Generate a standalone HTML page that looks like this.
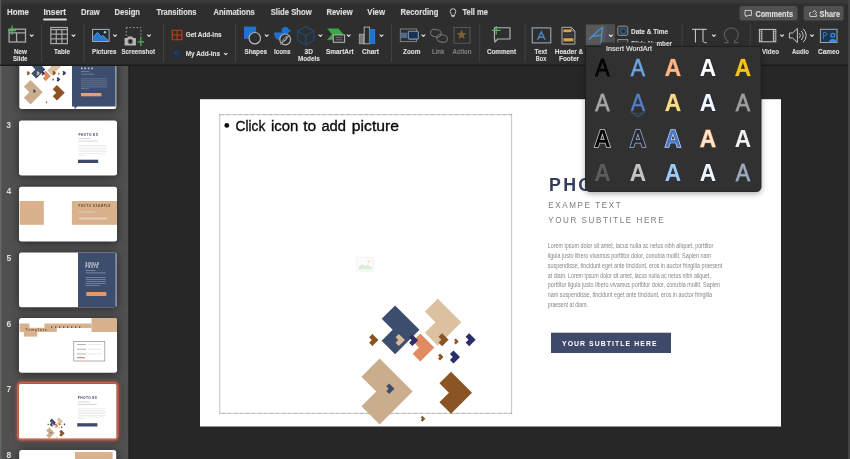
<!DOCTYPE html>
<html><head><meta charset="utf-8">
<style>
html,body{margin:0;padding:0;background:#2d2d2d;overflow:hidden;width:850px;height:459px}
svg{position:absolute;left:0;top:0;display:block;will-change:transform}
text{font-family:"Liberation Sans",sans-serif}
.tab{font-size:8.4px;font-weight:bold;fill:#dcdcdc;stroke:#dcdcdc;stroke-width:0.18px}
.lbl{font-size:7.6px;font-weight:bold;fill:#dedede;stroke:#dedede;stroke-width:0.15px}
.lbl .dim{fill:#7e7e7e;stroke:#7e7e7e}
</style></head><body>
<svg width="850" height="459" viewBox="0 0 850 459">
<defs>
<linearGradient id="topg" x1="0" y1="0" x2="0" y2="1"><stop offset="0" stop-color="#3c3c3c"/><stop offset="1" stop-color="#2e2e2e"/></linearGradient>
<clipPath id="sbclip"><rect x="0" y="66" width="128.5" height="393"/></clipPath>
<filter id="tshadow" x="-30%" y="-30%" width="160%" height="160%"><feGaussianBlur stdDeviation="4"/></filter>
<filter id="glow" x="-20%" y="-20%" width="140%" height="140%"><feGaussianBlur stdDeviation="1.5"/></filter>
<filter id="pshadow" x="-20%" y="-20%" width="140%" height="150%"><feGaussianBlur stdDeviation="3"/></filter>
<g id="s7txt">
<text x="349" y="91.5" style="font-size:17.8px;font-weight:bold;fill:#343d5c;letter-spacing:2.3px">PHOTO EX</text>
<text x="0" y="0" transform="translate(348.2 109.2) scale(0.84 1)" textLength="86.3" lengthAdjust="spacing" style="font-size:9.6px;fill:#7b7b7b">EXAMPE TEXT</text>
<text x="0" y="0" transform="translate(348.2 124) scale(0.84 1)" textLength="137.4" lengthAdjust="spacing" style="font-size:9.6px;fill:#7b7b7b">YOUR SUBTITLE HERE</text>
<g style="font-size:6.4px;fill:#868686">
<text x="347.8" y="149.2" textLength="165.6" lengthAdjust="spacingAndGlyphs">Lorem ipsum dolor sit amet, lacus nulla ac netus nibh aliquet, porttitor</text>
<text x="347.8" y="159.0" textLength="163.2" lengthAdjust="spacingAndGlyphs">ligula justo libero vivamus porttitor dolor, conubia mollit. Sapien nam</text>
<text x="347.8" y="168.8" textLength="174.5" lengthAdjust="spacingAndGlyphs">suspendisse, tincidunt eget ante tincidunt, eros in auctor fringilla praesent</text>
<text x="347.8" y="178.6" textLength="163.2" lengthAdjust="spacingAndGlyphs">at diam. Lorem ipsum dolor sit amet, lacus nulla ac netus nibh aliquet,</text>
<text x="347.8" y="188.4" textLength="172.2" lengthAdjust="spacingAndGlyphs">porttitor ligula justo libero vivamus porttitor dolor, conubia mollit. Sapien</text>
<text x="347.8" y="198.2" textLength="164.2" lengthAdjust="spacingAndGlyphs">nam suspendisse, tincidunt eget ante tincidunt, eros in auctor fringilla</text>
<text x="347.8" y="208.0" textLength="40.2" lengthAdjust="spacingAndGlyphs">praesent at diam.</text>
</g>
<rect x="351" y="233.7" width="120" height="20.3" fill="#3f4a6b"/>
<text x="0" y="0" transform="translate(362 246.6) scale(0.86 1)" textLength="109.9" lengthAdjust="spacing" style="font-size:8px;font-weight:bold;fill:#ffffff">YOUR SUBTITLE HERE</text>
</g>
<g id="s7shp">
<path d="M237.80 199.70 L261.30 223.20 L237.80 246.70 L224.88 233.77 L235.45 223.20 L224.88 212.62z" fill="#dbc1a0"/>
<path d="M195.10 206.40 L219.50 230.80 L195.10 255.20 L181.68 241.78 L192.66 230.80 L181.68 219.82z" fill="#3d4d6d"/>
<path d="M220.30 234.50 L234.30 248.50 L220.30 262.50 L212.60 254.80 L218.90 248.50 L212.60 242.20z" fill="#e08b62"/>
<path d="M172.40 234.90 L178.50 241.00 L172.40 247.10 L169.05 243.75 L171.79 241.00 L169.05 238.25z" fill="#8a5424"/>
<path d="M198.90 234.90 L205.00 241.00 L198.90 247.10 L195.55 243.75 L198.29 241.00 L195.55 238.25z" fill="#d6b995"/>
<path d="M212.30 235.40 L218.10 241.20 L212.30 247.00 L209.11 243.81 L211.72 241.20 L209.11 238.59z" fill="#2c2d6b"/>
<path d="M242.10 234.20 L248.60 240.70 L242.10 247.20 L238.53 243.62 L241.45 240.70 L238.53 237.77z" fill="#8a5424"/>
<path d="M255.70 239.40 L258.70 242.40 L255.70 245.40 L254.05 243.75 L255.40 242.40 L254.05 241.05z" fill="#8a5424"/>
<path d="M269.20 234.20 L275.70 240.70 L269.20 247.20 L265.62 243.62 L268.55 240.70 L265.62 237.77z" fill="#2c2d6b"/>
<path d="M240.00 254.50 L243.50 258.00 L240.00 261.50 L238.07 259.57 L239.65 258.00 L238.07 256.43z" fill="#8a5424"/>
<path d="M253.50 251.50 L260.00 258.00 L253.50 264.50 L249.93 260.93 L252.85 258.00 L249.93 255.07z" fill="#2c2d6b"/>
<path d="M179.60 259.50 L212.60 292.50 L179.60 325.50 L161.45 307.35 L176.30 292.50 L161.45 277.65z" fill="#c9ad8d"/>
<path d="M189.20 284.50 L194.40 289.70 L189.20 294.90 L186.34 292.04 L188.68 289.70 L186.34 287.36z" fill="#3d4d6d"/>
<path d="M251.00 272.70 L272.00 293.70 L251.00 314.70 L239.45 303.15 L248.90 293.70 L239.45 284.25z" fill="#8a5424"/>
<path d="M222.30 316.80 L225.30 319.80 L222.30 322.80 L220.65 321.15 L222.00 319.80 L220.65 318.45z" fill="#8a5424"/>
</g>
</defs>
<rect x="0" y="0" width="850" height="66" fill="#2e2e2e"/>
<rect x="0" y="0" width="850" height="6" fill="url(#topg)"/>
<rect x="0" y="0" width="1.2" height="66" fill="#555"/>
<rect x="0" y="64.5" width="850" height="1.5" fill="#1c1c1c"/>
<rect x="0" y="66" width="128.5" height="393" fill="#505050"/>
<rect x="0" y="66" width="1.4" height="393" fill="#666"/>
<rect x="128.5" y="66" width="1.5" height="393" fill="#1e1e1e"/>
<rect x="130" y="66" width="720" height="393" fill="#272727"/>
<rect x="848.2" y="0" width="1.8" height="459" fill="#474747"/>
<g class="tab">
<text x="7" y="14.6" textLength="22" lengthAdjust="spacingAndGlyphs">Home</text>
<text x="43.5" y="14.6" textLength="22.5" lengthAdjust="spacingAndGlyphs">Insert</text>
<text x="81" y="14.6" textLength="18.6" lengthAdjust="spacingAndGlyphs">Draw</text>
<text x="114.6" y="14.6" textLength="25.4" lengthAdjust="spacingAndGlyphs">Design</text>
<text x="156.5" y="14.6" textLength="40" lengthAdjust="spacingAndGlyphs">Transitions</text>
<text x="213.4" y="14.6" textLength="41.4" lengthAdjust="spacingAndGlyphs">Animations</text>
<text x="270.7" y="14.6" textLength="41" lengthAdjust="spacingAndGlyphs">Slide Show</text>
<text x="326.4" y="14.6" textLength="26.2" lengthAdjust="spacingAndGlyphs">Review</text>
<text x="367.3" y="14.6" textLength="17.7" lengthAdjust="spacingAndGlyphs">View</text>
<text x="400.6" y="14.6" textLength="37.8" lengthAdjust="spacingAndGlyphs">Recording</text>
<text x="462.4" y="14.6" textLength="25.6" lengthAdjust="spacingAndGlyphs">Tell me</text>
</g>
<rect x="43" y="18.5" width="24" height="2" rx="1" fill="#d8d8d8"/>
<!-- lightbulb -->
<g fill="none" stroke="#d0d0d0" stroke-width="0.9">
<path d="M450.2 11.5a2.8 2.8 0 1 1 5.6 0c0 1.3-0.9 2-1.2 2.8v1.2h-3.2v-1.2c-0.3-0.8-1.2-1.5-1.2-2.8z"/>
<path d="M451.6 16.6h2.8"/>
</g>
<!-- Comments / Share buttons -->
<rect x="739.5" y="6" width="58" height="14.6" rx="2" fill="#515151"/>
<rect x="803.6" y="6" width="40" height="14.6" rx="2" fill="#515151"/>
<g fill="none" stroke="#d8d8d8" stroke-width="0.9">
<path d="M745 10.4h6.4v5h-3.8l-1.4 1.6v-1.6h-1.2z"/>
<path d="M809.8 16.2v-3.6h1.2M812.5 12.6l2-2.2 2.2 2-2.2 2.1M810 16.5h6.4v-2.2"/>
</g>
<g class="tab" style="font-size:8.2px">
<text x="755.4" y="16.8" textLength="37.6" lengthAdjust="spacingAndGlyphs">Comments</text>
<text x="819.6" y="16.8" textLength="20.4" lengthAdjust="spacingAndGlyphs">Share</text>
</g>
<!-- separators -->
<g fill="#444444">
<rect x="41.2" y="24" width="0.9" height="38"/>
<rect x="83.6" y="24" width="0.9" height="38"/>
<rect x="163.1" y="24" width="0.9" height="38"/>
<rect x="235" y="24" width="0.9" height="38"/>
<rect x="391" y="24" width="0.9" height="38"/>
<rect x="479.3" y="24" width="0.9" height="38"/>
<rect x="524.7" y="24" width="0.9" height="38"/>
<rect x="681.6" y="24" width="0.9" height="38"/>
<rect x="749.7" y="24" width="0.9" height="38"/>
</g>
<!-- chevrons -->
<g fill="none" stroke="#e6e6e6" stroke-width="1.1" stroke-linecap="round" stroke-linejoin="round">
<path d="M30.2 34.8l1.5 1.5 1.5-1.5"/>
<path d="M72 34.8l1.5 1.5 1.5-1.5"/>
<path d="M113.5 34.8l1.5 1.5 1.5-1.5"/>
<path d="M147.5 34.8l1.5 1.5 1.5-1.5"/>
<path d="M265.2 34.8l1.5 1.5 1.5-1.5"/>
<path d="M318.9 34.8l1.5 1.5 1.5-1.5"/>
<path d="M347.2 34.8l1.5 1.5 1.5-1.5"/>
<path d="M380 34.8l1.5 1.5 1.5-1.5"/>
<path d="M421.9 34.8l1.5 1.5 1.5-1.5"/>
<path d="M712.4 34.8l1.5 1.5 1.5-1.5"/>
<path d="M780.5 34.8l1.5 1.5 1.5-1.5"/>
<path d="M810.5 34.8l1.5 1.5 1.5-1.5"/>
<path d="M224.5 53.4l1.3 1.3 1.3-1.3"/>
</g>
<!-- New Slide -->
<g fill="none" stroke="#a8a8a8" stroke-width="1.3">
<rect x="9.1" y="29.2" width="16.4" height="12.8"/>
<path d="M9.1 32.8h16.4M16.6 32.8v9.2"/>
</g>
<path d="M12.1 25.8v8.9M7.9 30.5h8.1" stroke="#58b05c" stroke-width="1.3"/>
<!-- Table -->
<g fill="none" stroke="#a8a8a8" stroke-width="1.2">
<rect x="50.8" y="27.5" width="16.6" height="16.1"/>
<path d="M50.8 29.6h16.6M50.8 34.2h16.6M50.8 38.9h16.6M56.3 29.6v14M61.9 29.6v14"/>
</g>
<!-- Pictures -->
<rect x="92.6" y="29.4" width="16.5" height="12" fill="#1a2a3a" stroke="#b0b0b0" stroke-width="1"/>
<path d="M93.1 40.9v-3.5l4.3-5 4 4.3 1.6-1.3 5.6 5.5z" fill="#2a78d0"/>
<path d="M93.1 37.4l4.3-5 4 4.3M101.4 36.7l1.6-1.3 5.6 5.5" fill="none" stroke="#6aaaf0" stroke-width="0.8"/>
<circle cx="105" cy="32.3" r="1.3" fill="#c8b890"/>
<!-- Screenshot -->
<path d="M126.3 27.6h14.6v9" fill="none" stroke="#9a9a9a" stroke-width="1" stroke-dasharray="1.6 1.8"/>
<path d="M126.3 27.6v8.8" fill="none" stroke="#9a9a9a" stroke-width="1" stroke-dasharray="1.6 1.8"/>
<path d="M124.6 38h2.5l1-1.5h4.2l1 1.5h2.6v7.4h-11.3z" fill="#b8b8b8"/>
<circle cx="130.3" cy="41.4" r="2.6" fill="#5a5a5a"/>
<circle cx="130.3" cy="41.4" r="1.3" fill="#111"/>
<path d="M140.8 36.5v9.6M137.6 41.8h6.4" stroke="#58b05c" stroke-width="1.2"/>
<!-- Get Add-ins -->
<rect x="172.3" y="30.2" width="9.6" height="9.6" rx="0.8" fill="#4a2216" stroke="#b04828" stroke-width="1.1"/>
<path d="M177.1 30.2v9.6M172.3 35h9.6" stroke="#b04828" stroke-width="1"/>
<!-- My Add-ins -->
<circle cx="176.6" cy="54" r="4.6" fill="#1e3048"/>
<circle cx="176.6" cy="53" r="1.6" fill="none" stroke="#34506e" stroke-width="0.7"/>
<!-- Shapes -->
<rect x="244" y="26.6" width="12.1" height="12.2" fill="#1f72d0"/>
<circle cx="254.8" cy="38.2" r="5.7" fill="#2d2d2d" stroke="#b5b5b5" stroke-width="1.2"/>
<!-- Icons -->
<circle cx="285.3" cy="30.8" r="3.7" fill="#1f72d0"/>
<path d="M288 29.2l3.6 1.6-3.4 1.8z" fill="#1f72d0"/>
<path d="M274.2 32.6h8.6l4.6 1.2c0.4 4-2.6 6.4-6.2 6.4h-0.8a6.2 6.2 0 0 1-6.2-6.2z" fill="#1f72d0"/>
<circle cx="285.2" cy="39.4" r="5.4" fill="#2d2d2d" stroke="#b5b5b5" stroke-width="1.2"/>
<path d="M280.4 44.6l8.8-9.2" stroke="#b5b5b5" stroke-width="1"/>
<path d="M282.6 41.8c0-3 2-4.6 4.6-5.4c0.2 2.6-1.4 4.8-4.6 5.4z" fill="none" stroke="#b5b5b5" stroke-width="0.8"/>
<!-- 3D Models -->
<g fill="none" stroke="#234a72" stroke-width="1.1" stroke-linejoin="round">
<path d="M305.8 26.5l8 4.6v9.2l-8 4.6-8-4.6v-9.2z"/>
<path d="M297.8 31.1l8 4.6 8-4.6M305.8 35.7v9.2"/>
</g>
<!-- SmartArt -->
<path d="M327 28.6h11.5l5 5.6-5 5.6h-11.5l5-5.6z" fill="#3da648"/>
<rect x="333.3" y="34.9" width="11.3" height="7.4" fill="#2d2d2d" stroke="#b0b0b0" stroke-width="1.1"/>
<path d="M335.5 37.4h7M335.5 39.8h7" stroke="#888" stroke-width="0.8"/>
<!-- Chart -->
<rect x="359.3" y="34.2" width="4.4" height="9.6" fill="#777" stroke="#aaa" stroke-width="0.8"/>
<rect x="364.2" y="27.1" width="5.2" height="16.7" fill="#2d2d2d" stroke="#b8b8b8" stroke-width="0.9"/>
<rect x="369.4" y="29.3" width="5.4" height="14.5" fill="#1f72d0" stroke="#3a8ae0" stroke-width="0.6"/>
<!-- Zoom -->
<rect x="400.3" y="29" width="16.3" height="12.6" fill="#2d2d2d" stroke="#8a8a8a" stroke-width="0.9"/>
<rect x="401" y="32.6" width="6" height="5.5" fill="#4e6a88"/>
<rect x="408.3" y="31.3" width="10" height="7.8" rx="1" fill="#173252" stroke="#7d9ab8" stroke-width="1.1"/>
<!-- Link -->
<g fill="none" stroke="#6e6e6e" stroke-width="1.2">
<rect x="430.6" y="29.6" width="10.6" height="7.2" rx="3.6" transform="rotate(12 436 33)"/>
<rect x="436.8" y="34.8" width="10.6" height="7.2" rx="3.6" transform="rotate(12 442 38.4)"/>
</g>
<!-- Action -->
<rect x="454" y="27.4" width="16" height="15.8" fill="none" stroke="#5e5e5e" stroke-width="0.9"/>
<path d="M461.6 29.8l1.4 3.1 3.4 0.3-2.6 2.3 0.8 3.4-3-1.9-3 1.9 0.8-3.4-2.6-2.3 3.4-0.3z" fill="#7e6032"/>
<!-- Comment -->
<path d="M494.4 27.8h15.6v11.2h-12.2l-3 3.2v-3.2h-0.4z" fill="none" stroke="#b8b8b8" stroke-width="1.1" stroke-linejoin="round"/>
<path d="M496.2 26v8.6M491.8 30.3h8.8" stroke="#5ab85e" stroke-width="1.2"/>
<!-- Text Box -->
<rect x="532.2" y="27.9" width="18.6" height="15" fill="none" stroke="#a6b4c2" stroke-width="1"/>
<path d="M537.6 39.8l3.7-7.9 3.8 7.9M539 37.2h4.6" fill="none" stroke="#4a84c8" stroke-width="1.4"/>
<!-- Header & Footer -->
<path d="M562 27.3h9.3l3.6 3.6v13.2h-12.9z" fill="#2d2d2d" stroke="#b0b0b0" stroke-width="1"/>
<path d="M571.3 27.3v3.6h3.6" fill="none" stroke="#b0b0b0" stroke-width="0.8"/>
<rect x="563.4" y="29.4" width="7.6" height="2.8" fill="#d8a447"/>
<rect x="563.4" y="38.2" width="10" height="3.2" fill="#d8a447"/>
<path d="M564 34.6h9M564 36.2h9" stroke="#555" stroke-width="0.6"/>
<!-- WordArt button -->
<rect x="585.8" y="24.5" width="29.2" height="20.7" fill="#585858"/>
<rect x="605.5" y="24.5" width="9.5" height="20.7" fill="#4e4e4e"/>
<path d="M589.4 39.2c3.5-3.2 9-9.5 13.2-11.8-0.6 4.5-1.4 10.5-1.6 15.6M591.6 36.6c3-0.3 6.5-0.9 9.6-1.6" fill="none" stroke="#4a90d8" stroke-width="1.3" stroke-linecap="round" stroke-linejoin="round"/>
<path d="M609.3 35l1.5 1.5 1.5-1.5" fill="none" stroke="#e6e6e6" stroke-width="1.1" stroke-linecap="round"/>
<!-- Date & Time -->
<rect x="617.8" y="26.1" width="10" height="9.3" rx="1.5" fill="#3a3a3a" stroke="#9a9a9a" stroke-width="0.9"/>
<circle cx="623.3" cy="31.2" r="2.6" fill="#16324e" stroke="#3a78b8" stroke-width="0.8"/>
<rect x="617.8" y="39.6" width="10" height="6" fill="#3a3a3a" stroke="#9a9a9a" stroke-width="0.9"/>
<!-- pi / omega -->
<g fill="none" stroke="#d4d4d4" stroke-width="1">
<path d="M692 29.3h14.8M695.4 29.3v13.2M703 29.3v11.4c0 1.4 1 2 2.2 2h1.6"/>
</g>
<path d="M724 42.6h4v-1.6a7 7 0 1 1 6.6 0v1.6h4" fill="none" stroke="#5c5c5c" stroke-width="1.2"/>
<!-- Video -->
<g fill="none" stroke="#c8c8c8" stroke-width="1">
<rect x="759.4" y="29.4" width="16.4" height="12.4"/>
<path d="M761.8 29.4v12.4M773.4 29.4v12.4"/>
</g>
<path d="M760.2 31.4h1M760.2 33.6h1M760.2 35.8h1M760.2 38h1M760.2 40.2h1M774 31.4h1M774 33.6h1M774 35.8h1M774 38h1M774 40.2h1" stroke="#c8c8c8" stroke-width="0.7"/>
<!-- Audio -->
<g fill="none" stroke="#c8c8c8" stroke-width="1" stroke-linejoin="round">
<path d="M789.4 33h3.2l4.8-4.6v14.2l-4.8-4.6h-3.2z"/>
<path d="M799.2 33.2a3 3 0 0 1 0 4.6M801.2 31a6 6 0 0 1 0 9M803.2 28.8a9 9 0 0 1 0 13.4"/>
</g>
<!-- Cameo -->
<rect x="820.4" y="29.3" width="16.6" height="13.2" fill="#1c3450" stroke="#a8a8a8" stroke-width="1"/>
<path d="M823.4 39v-6.4h1.8a1.6 1.6 0 0 1 0 3.2h-1.8" fill="none" stroke="#3f7fc8" stroke-width="0.9"/>
<circle cx="832.8" cy="35.2" r="1.9" fill="none" stroke="#3a8ee8" stroke-width="1.2"/>
<path d="M829 42.4a3.8 3.4 0 0 1 7.6 0z" fill="#3a8ee8"/>
<!-- ribbon labels -->
<g class="lbl">
<text x="14" y="54" textLength="13" lengthAdjust="spacingAndGlyphs">New</text>
<text x="13" y="61.4" textLength="14.5" lengthAdjust="spacingAndGlyphs">Slide</text>
<text x="54" y="54" textLength="16" lengthAdjust="spacingAndGlyphs">Table</text>
<text x="92" y="54" textLength="24.5" lengthAdjust="spacingAndGlyphs">Pictures</text>
<text x="121.5" y="54" textLength="33.5" lengthAdjust="spacingAndGlyphs">Screenshot</text>
<text x="185.7" y="37.3" textLength="35.9" lengthAdjust="spacingAndGlyphs">Get Add-ins</text>
<text x="185.7" y="56.2" textLength="34.3" lengthAdjust="spacingAndGlyphs">My Add-ins</text>
<text x="244.4" y="54" textLength="22.6" lengthAdjust="spacingAndGlyphs">Shapes</text>
<text x="274" y="54" textLength="16.5" lengthAdjust="spacingAndGlyphs">Icons</text>
<text x="304.6" y="54" textLength="8.4" lengthAdjust="spacingAndGlyphs">3D</text>
<text x="298" y="61.4" textLength="21.7" lengthAdjust="spacingAndGlyphs">Models</text>
<text x="326" y="54" textLength="27.6" lengthAdjust="spacingAndGlyphs">SmartArt</text>
<text x="362" y="54" textLength="17" lengthAdjust="spacingAndGlyphs">Chart</text>
<text x="403" y="54" textLength="17.5" lengthAdjust="spacingAndGlyphs">Zoom</text>
<text x="432" y="54" textLength="12.4" lengthAdjust="spacingAndGlyphs" class="dim">Link</text>
<text x="452.6" y="54" textLength="18.9" lengthAdjust="spacingAndGlyphs" class="dim">Action</text>
<text x="486.9" y="54" textLength="29.1" lengthAdjust="spacingAndGlyphs">Comment</text>
<text x="534.5" y="53.8" textLength="12.5" lengthAdjust="spacingAndGlyphs">Text</text>
<text x="535.8" y="61.2" textLength="10.4" lengthAdjust="spacingAndGlyphs">Box</text>
<text x="554.7" y="53.8" textLength="28.6" lengthAdjust="spacingAndGlyphs">Header &amp;</text>
<text x="559" y="61.2" textLength="20" lengthAdjust="spacingAndGlyphs">Footer</text>
<text x="631" y="33.6" textLength="37" lengthAdjust="spacingAndGlyphs">Date &amp; Time</text>
<text x="631" y="46.3" textLength="40.9" lengthAdjust="spacingAndGlyphs">Slide Number</text>
<text x="762" y="54" textLength="17" lengthAdjust="spacingAndGlyphs">Video</text>
<text x="792" y="54" textLength="17" lengthAdjust="spacingAndGlyphs">Audio</text>
<text x="818" y="54" textLength="21.4" lengthAdjust="spacingAndGlyphs">Cameo</text>
</g>

<g clip-path="url(#sbclip)">
<g fill="#000" opacity="0.5" filter="url(#tshadow)"><rect x="19" y="55.4" width="98" height="55" rx="3"/><rect x="19" y="121.6" width="98" height="55" rx="3"/><rect x="19" y="187.7" width="98" height="55" rx="3"/><rect x="19" y="253.4" width="98" height="55" rx="3"/><rect x="19" y="319" width="98" height="55" rx="3"/><rect x="19" y="384.5" width="98" height="55" rx="3"/><rect x="19" y="451" width="98" height="55" rx="3"/></g>
<!-- thumb 2 -->
<rect x="19.3" y="54.4" width="97" height="54.6" rx="2.5" fill="#ffffff"/>
<path d="M72 54.4h43.6v52.2h-38.4l-2.4 2.4-0.4-2.4h-2.4z" fill="#3d4d6d"/>
<clipPath id="t2clip"><rect x="19.3" y="54.4" width="52.7" height="54.6"/></clipPath>
<g clip-path="url(#t2clip)"><use href="#s7shp" transform="translate(-35.9 -16) scale(0.37)"/></g>
<rect x="81" y="93" width="20.4" height="3.3" fill="#e0a07a"/>
<g fill="#c8cede"><rect x="81" y="67.6" width="1.6" height="1.6"/><rect x="84.4" y="67.6" width="1.6" height="1.6"/><rect x="87.8" y="67.6" width="1.6" height="1.6"/><rect x="91.2" y="67.6" width="1.6" height="1.6"/></g>
<g fill="#7e89a4"><rect x="81" y="71" width="8" height="0.8"/><rect x="81" y="73.7" width="13" height="0.8"/>
<rect x="81" y="78.6" width="26" height="0.6"/><rect x="81" y="80.6" width="26" height="0.6"/><rect x="81" y="82.6" width="26" height="0.6"/><rect x="81" y="84.6" width="26" height="0.6"/><rect x="81" y="86.6" width="26" height="0.6"/><rect x="81" y="88.4" width="8" height="0.6"/></g>
<!-- thumb 3 -->
<rect x="19" y="120.6" width="98" height="54.8" rx="2.5" fill="#ffffff"/>
<g transform="translate(19.2 120.6)"><g id="thtxt">
<text x="59.4" y="15" textLength="19.2" lengthAdjust="spacing" style="font-size:3.2px;font-weight:bold;fill:#3a4262">PHOTO EX</text>
<rect x="59.4" y="17.6" width="12" height="0.6" fill="#b8b8b8"/>
<rect x="59.4" y="20.1" width="19" height="0.6" fill="#b8b8b8"/>
<g fill="#e0e0e0"><rect x="59.4" y="24.4" width="27.5" height="0.55"/><rect x="59.4" y="26" width="27" height="0.55"/><rect x="59.4" y="27.7" width="29" height="0.55"/><rect x="59.4" y="29.3" width="27" height="0.55"/><rect x="59.4" y="30.9" width="28.5" height="0.55"/><rect x="59.4" y="32.6" width="27.3" height="0.55"/><rect x="59.4" y="34.2" width="7" height="0.55"/></g>
<rect x="58.8" y="39.1" width="20.2" height="3.3" fill="#3f4a6b"/>
</g></g>
<!-- thumb 4 -->
<rect x="19" y="186.7" width="98" height="54.8" rx="2.5" fill="#ffffff"/>
<rect x="19.6" y="201" width="24.2" height="23.8" fill="#d9b18d"/>
<rect x="71.9" y="201" width="45.1" height="23.8" fill="#d9b18d"/>
<text x="78.4" y="207" textLength="32" lengthAdjust="spacing" style="font-size:2.8px;font-weight:bold;fill:#5a3e30">PHOTO EXAMPLE</text>
<rect x="79" y="211.5" width="16" height="0.8" fill="#e8d0b8"/>
<rect x="79" y="217.5" width="28" height="2" fill="#e8d0b8"/>
<!-- thumb 5 -->
<rect x="19" y="252.4" width="98" height="54.8" rx="2.5" fill="#ffffff"/>
<path d="M78 252.4h36.5a2.5 2.5 0 0 1 2.5 2.5v49.8a2.5 2.5 0 0 1-2.5 2.5h-36.5z" fill="#3d4d6d"/>
<rect x="115.6" y="253.5" width="1" height="52.6" fill="#b8bccb"/>
<g style="font-size:9px;font-weight:bold;fill:#eef0f6"><text x="0" y="0" transform="translate(85.6 264.6) scale(0.3)" textLength="45" lengthAdjust="spacing">SINGLE</text><text x="0" y="0" transform="translate(85.6 268.3) scale(0.3)" textLength="42" lengthAdjust="spacing">PHOTO</text></g>
<g fill="#8a94ae"><rect x="85.6" y="270" width="10" height="0.8"/><rect x="85.6" y="272.5" width="20" height="0.8"/>
<rect x="85.6" y="277" width="20" height="0.7"/><rect x="85.6" y="279" width="20" height="0.7"/><rect x="85.6" y="281" width="20" height="0.7"/><rect x="85.6" y="283" width="20" height="0.7"/><rect x="85.6" y="285" width="14" height="0.7"/></g>
<rect x="86.2" y="292" width="20.3" height="4" rx="1" fill="#e09a72"/>
<!-- thumb 6 -->
<rect x="19" y="318" width="98" height="54.8" rx="2.5" fill="#ffffff"/>
<path d="M91.5 318h23a2.5 2.5 0 0 1 2.5 2.5v11.5h-25.5z" fill="#d9b18d"/>
<rect x="44.4" y="323.5" width="47.1" height="4.5" fill="#d9b18d"/>
<rect x="19.6" y="323.5" width="9.8" height="4.5" fill="#d9b18d"/>
<rect x="19.6" y="327.8" width="37.2" height="4.1" fill="#d9b18d"/>
<rect x="23.9" y="331.9" width="13.5" height="4.7" fill="#d9b18d"/>
<text x="25.6" y="330.9" textLength="21.2" lengthAdjust="spacing" style="font-size:3px;font-weight:bold;fill:#5a4030">Template</text>
<g fill="#7a6050"><rect x="51" y="326.2" width="1.3" height="1.8"/><rect x="55" y="326.2" width="1.3" height="1.8"/><rect x="59" y="326.2" width="1.3" height="1.8"/><rect x="63" y="326.2" width="1.3" height="1.8"/><rect x="67" y="326.2" width="1.3" height="1.8"/><rect x="71" y="326.2" width="1.3" height="1.8"/><rect x="75" y="326.2" width="1.3" height="1.8"/><rect x="79" y="326.2" width="1.3" height="1.8"/></g>
<rect x="73.8" y="341.4" width="31" height="19.6" fill="none" stroke="#8a8a8a" stroke-width="0.7"/>
<g fill="#a0a0a0"><rect x="77" y="344" width="9" height="0.8"/><rect x="77" y="348.8" width="9" height="0.8"/><rect x="77" y="353.6" width="9" height="0.8"/></g>
<g fill="#dadada"><rect x="88" y="344" width="14" height="0.6"/><rect x="88" y="348.8" width="14" height="0.6"/><rect x="88" y="353.6" width="14" height="0.6"/></g>
<rect x="77" y="357.3" width="8" height="0.9" fill="#d06040"/>
<!-- thumb 7 selected -->
<rect x="17.4" y="382.3" width="100.6" height="57.8" rx="4" fill="none" stroke="#d0604a" stroke-width="3" opacity="0.6" filter="url(#glow)"/>
<rect x="17.9" y="382.8" width="99.6" height="56.8" rx="3.5" fill="none" stroke="#cc5f48" stroke-width="2"/>
<rect x="19" y="384" width="97.4" height="54.4" rx="1.5" fill="#ffffff"/>
<use href="#thtxt" transform="translate(18.4 384.1)"/>
<g transform="translate(19.2 384.1) scale(0.1672)"><use href="#s7shp"/></g>
<!-- thumb 8 -->
<rect x="19.2" y="450" width="97" height="54.6" rx="2.5" fill="#ffffff"/>
<rect x="75" y="452" width="37.6" height="20" fill="#d9b18d"/>
</g>
<g style="font-size:8.5px;font-weight:bold;fill:#dcdcdc">
<text x="6.2" y="128.4">3</text>
<text x="6.6" y="194.2">4</text>
<text x="6.4" y="260.9">5</text>
<text x="6.4" y="327">6</text>
<text x="6.6" y="391.8">7</text>
<text x="6.4" y="457.6">8</text>
</g>

<rect x="200" y="99.2" width="581" height="327.3" fill="#ffffff"/>
<rect x="219.8" y="114.6" width="291.8" height="298.8" fill="none" stroke="#8e8e8e" stroke-width="1.1" stroke-dasharray="0.6 0.6"/>
<circle cx="226.8" cy="125.4" r="2.4" fill="#0a0a0a"/>
<g style="font-size:15.4px;fill:#0a0a0a;stroke:#0a0a0a;stroke-width:0.35px"><text x="235.6" y="130.9" textLength="29.7" lengthAdjust="spacingAndGlyphs">Click</text><text x="271" y="130.9" textLength="27.3" lengthAdjust="spacingAndGlyphs">icon</text><text x="303.2" y="130.9" textLength="13" lengthAdjust="spacingAndGlyphs">to</text><text x="321.4" y="130.9" textLength="24.6" lengthAdjust="spacingAndGlyphs">add</text><text x="351.8" y="130.9" textLength="47.2" lengthAdjust="spacingAndGlyphs">picture</text></g>
<g opacity="0.42">
<rect x="356.8" y="257.3" width="16.6" height="13.9" fill="#fafafa" stroke="#d8d8d8" stroke-width="0.7"/>
<path d="M358.5 269.6v-2.5l3.5-3 3 2 2.5-1.5 4.5 3v2z" fill="#a8d0a0"/>
<circle cx="368.8" cy="261.4" r="1.5" fill="#f0c080"/>
</g>
<g transform="translate(200 99)"><use href="#s7txt"/><use href="#s7shp"/></g>

<path d="M585.5 46.5h175.5v140.5a4.5 4.5 0 0 1-4.5 4.5h-166.5a4.5 4.5 0 0 1-4.5-4.5z" fill="#000" opacity="0.35" filter="url(#pshadow)" transform="translate(0 2)"/>
<path d="M585.5 46.5h175.5v140.5a4.5 4.5 0 0 1-4.5 4.5h-166.5a4.5 4.5 0 0 1-4.5-4.5z" fill="#313131" stroke="#1f1f1f" stroke-width="0.9"/>
<rect x="601" y="42.4" width="55" height="11.5" fill="#313131"/>
<text x="606" y="50.8" textLength="46" lengthAdjust="spacingAndGlyphs" style="font-size:7.4px;fill:#e6e6e6;stroke:#e6e6e6;stroke-width:0.15px">Insert WordArt</text>
<text x="0" y="0" text-anchor="middle" transform="translate(602.5 76) scale(0.88 1)" style="font-size:24.4px;font-weight:normal;fill:#050505;stroke:#050505;stroke-width:0.9;paint-order:stroke">A</text>
<text x="0" y="0" text-anchor="middle" transform="translate(637.9 76) scale(0.88 1)" style="font-size:24.4px;font-weight:normal;fill:#6ea6e0;stroke:#4a7ab0;stroke-width:1.0;paint-order:stroke">A</text>
<text x="0" y="0" text-anchor="middle" transform="translate(673 76) scale(0.93 1)" style="font-size:24.4px;font-weight:bold;fill:#f8b888;stroke:#c06030;stroke-width:0.7;paint-order:stroke">A</text>
<text x="0" y="0" text-anchor="middle" transform="translate(708 76) scale(0.93 1)" style="font-size:24.4px;font-weight:bold;fill:#ffffff;stroke:#1c2540;stroke-width:0.8;paint-order:stroke">A</text>
<text x="0" y="0" text-anchor="middle" transform="translate(742.9 76) scale(0.93 1)" style="font-size:24.4px;font-weight:bold;fill:#f6c41a;stroke:#8a6a10;stroke-width:0.6;paint-order:stroke">A</text>
<text x="0" y="0" text-anchor="middle" transform="translate(602.5 111.2) scale(0.88 1)" style="font-size:24.4px;font-weight:normal;fill:#a6a6a6;stroke:#909090;stroke-width:0.9;paint-order:stroke">A</text>
<text x="0" y="0" text-anchor="middle" transform="translate(637.9 111.2) scale(0.88 1)" style="font-size:24.4px;font-weight:normal;fill:#5a7ec0;stroke:#3a5a90;stroke-width:1.0;paint-order:stroke">A</text>
<text x="0" y="0" text-anchor="middle" transform="translate(673 111.2) scale(0.93 1)" style="font-size:24.4px;font-weight:bold;fill:#fcdc84;stroke:#a08030;stroke-width:0.5;paint-order:stroke">A</text>
<text x="0" y="0" text-anchor="middle" transform="translate(708 111.2) scale(0.93 1)" style="font-size:24.4px;font-weight:bold;fill:#f4f8ff;stroke:#1a2a48;stroke-width:1.0;paint-order:stroke">A</text>
<text x="0" y="0" text-anchor="middle" transform="translate(742.9 111.2) scale(0.88 1)" style="font-size:24.4px;font-weight:normal;fill:#a0a0a0;stroke:#8a8a8a;stroke-width:0.9;paint-order:stroke">A</text>
<text x="0" y="0" text-anchor="middle" transform="translate(602.5 146.6) scale(0.93 1)" style="font-size:24.4px;font-weight:bold;fill:#060606;stroke:#c4c4c4;stroke-width:1.7;paint-order:stroke">A</text>
<text x="0" y="0" text-anchor="middle" transform="translate(637.9 146.6) scale(0.93 1)" style="font-size:24.4px;font-weight:bold;fill:#252a34;stroke:#9cacc8;stroke-width:1.6;paint-order:stroke">A</text>
<text x="0" y="0" text-anchor="middle" transform="translate(673 146.6) scale(0.93 1)" style="font-size:24.4px;font-weight:bold;fill:#4a78c6;stroke:#c8d8f4;stroke-width:1.5;paint-order:stroke">A</text>
<text x="0" y="0" text-anchor="middle" transform="translate(708 146.6) scale(0.93 1)" style="font-size:24.4px;font-weight:bold;fill:#fbe6d4;stroke:#c0622c;stroke-width:1.3;paint-order:stroke">A</text>
<text x="0" y="0" text-anchor="middle" transform="translate(742.9 146.6) scale(0.93 1)" style="font-size:24.4px;font-weight:bold;fill:#f0f0f0;stroke:#202020;stroke-width:0.6;paint-order:stroke">A</text>
<text x="0" y="0" text-anchor="middle" transform="translate(602.5 181.2) scale(0.93 1)" style="font-size:24.4px;font-weight:bold;fill:#5c5c5c">A</text>
<text x="0" y="0" text-anchor="middle" transform="translate(637.9 181.2) scale(0.93 1)" style="font-size:24.4px;font-weight:bold;fill:#c4c4c4">A</text>
<text x="0" y="0" text-anchor="middle" transform="translate(673 181.2) scale(0.93 1)" style="font-size:24.4px;font-weight:bold;fill:#9ccaf2;stroke:#1a3050;stroke-width:1.0;paint-order:stroke">A</text>
<text x="0" y="0" text-anchor="middle" transform="translate(708 181.2) scale(0.93 1)" style="font-size:24.4px;font-weight:bold;fill:#f2f6fc;stroke:#18243a;stroke-width:1.1;paint-order:stroke">A</text>
<text x="0" y="0" text-anchor="middle" transform="translate(742.9 181.2) scale(0.88 1)" style="font-size:24.4px;font-weight:normal;fill:#a0acbc;stroke:#8090a4;stroke-width:0.9;paint-order:stroke">A</text>
<text x="0" y="0" text-anchor="middle" transform="translate(637.9 111.6) scale(0.88 -0.28)" filter="url(#glow)" style="font-size:24.4px;fill:#5a7ec0;opacity:0.45">A</text>
</svg>
</body></html>
